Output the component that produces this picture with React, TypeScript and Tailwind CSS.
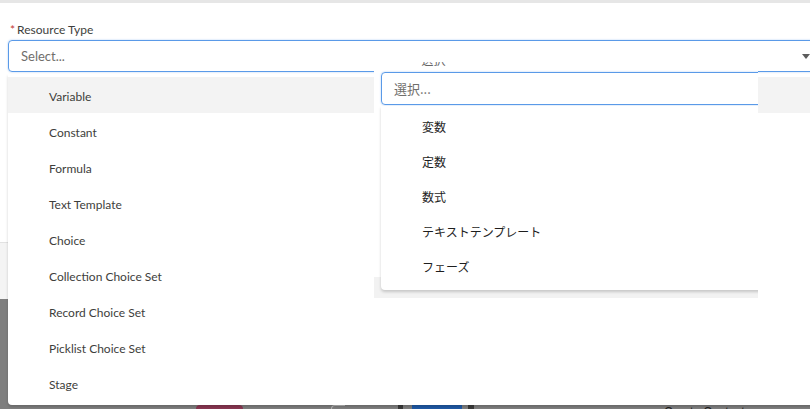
const leftItems = [
  'Variable',
  'Constant',
  'Formula',
  'Text Template',
  'Choice',
  'Collection Choice Set',
  'Record Choice Set',
  'Picklist Choice Set',
  'Stage',
];

const jaItems = ['変数', '定数', '数式', 'テキストテンプレート', 'フェーズ'];

const App = () => {
  return (
    <div className="relative w-[810px] h-[409px] overflow-hidden bg-white font-['Lato','Noto_Sans_CJK_JP',sans-serif] text-[12px]">
      <div className="h-[3px] bg-[#e6e6e6]" />

      {/* form field */}
      <div className="pl-[8px] pt-[19px]">
        <label className="flex h-[16px] items-center pl-[2px] text-[12px] text-[#3e3e3c]">
          <span className="mr-[2px] text-[#c23934]">*</span>
          Resource Type
        </label>
        <div className="mt-[2px] flex h-[32px] w-[812px] items-center justify-between rounded-[4px] border border-[#5a9ae8] pl-[12px] pr-[9px] shadow-[0_0_2px_#a9c9f2]">
          <span className="pt-[1px] text-[13px] text-[#706e6b]">Select...</span>
          <svg width="8" height="5" viewBox="0 0 8 5" className="mt-[1px]">
            <path d="M0 0h8L4 5z" fill="#5c5c5c" />
          </svg>
        </div>
      </div>

      {/* page behind the menus */}
      <div className="flex h-[337px] flex-col">
        <div className="h-[171px] border-b border-[#e2e2e2]" />
        <div className="h-[56px] bg-[#f4f4f4]" />
        <div className="flex flex-1 flex-col bg-[#7f7f7f]">
          <div className="mt-auto flex h-[4px] items-start">
            <div className="ml-[196px] h-[4px] w-[47px] rounded-t-[8px] bg-[#8a3752]" />
            <div className="ml-[88px] h-[4px] w-[14px] rounded-tl-[10px] border-l border-t border-[#b8b8b8]" />
            <div className="ml-[53px] h-[4px] w-[5px] bg-[#3a3a3a]" />
            <div className="ml-[9px] h-[4px] w-[50px] bg-[#1f5aa6]" />
            <div className="ml-[6px] h-[4px] w-[6px] bg-[#3a3a3a]" />
            <div className="ml-[190px] h-[4px] overflow-hidden">
              <div className="mt-[1px] font-['Liberation_Sans',sans-serif] text-[12px] leading-[12px] text-[#1c1c1c]">
                Create Contact
              </div>
            </div>
          </div>
        </div>
      </div>

      {/* resource type menu */}
      <div className="absolute left-[8px] top-[74px] h-[331px] w-[810px] rounded-b-[4px] bg-white pt-[3px] shadow-[0_2px_3px_rgba(0,0,0,0.18)]">
        {leftItems.map((item, i) => (
          <div
            key={item}
            className={
              i === 0
                ? 'flex h-[36px] items-center bg-[#f3f3f3] pl-[41px] pt-[3px] text-[#3e3e3c]'
                : 'flex h-[36px] items-center pl-[41px] pt-[3px] text-[#3e3e3c]'
            }
          >
            {item}
          </div>
        ))}
      </div>

      {/* japanese screenshot laid over */}
      <div className="absolute left-[374px] top-[62px] flex h-[236px] w-[384px] flex-col overflow-hidden bg-[linear-gradient(to_bottom,#ffffff_215px,#f2f2f2_215px)] font-['Noto_Sans_CJK_JP',sans-serif]">
        <div className="h-[10px] overflow-hidden pl-[19px]">
          <div className="-mt-[9px] text-[12px] leading-[14px] text-[#666]">- ·&nbsp;&nbsp;· 選択</div>
        </div>
        <div className="ml-[7px] flex h-[33px] w-[400px] shrink-0 items-center rounded-[4px] border border-[#5a9ae8] pl-[12px] shadow-[0_0_2px_#a9c9f2]">
          <span className="text-[13px] text-[#706e6b]">選択...</span>
        </div>
        <div className="ml-[7px] mt-[1px] h-[184px] w-[400px] shrink-0 rounded-b-[4px] bg-white pt-[3px] shadow-[0_2px_3px_rgba(0,0,0,0.18)]">
          {jaItems.map((item) => (
            <div key={item} className="flex h-[35px] items-center pl-[41px] text-[12px] text-[#1e1e1e]">
              {item}
            </div>
          ))}
        </div>
      </div>
    </div>
  );
};

export default App;
